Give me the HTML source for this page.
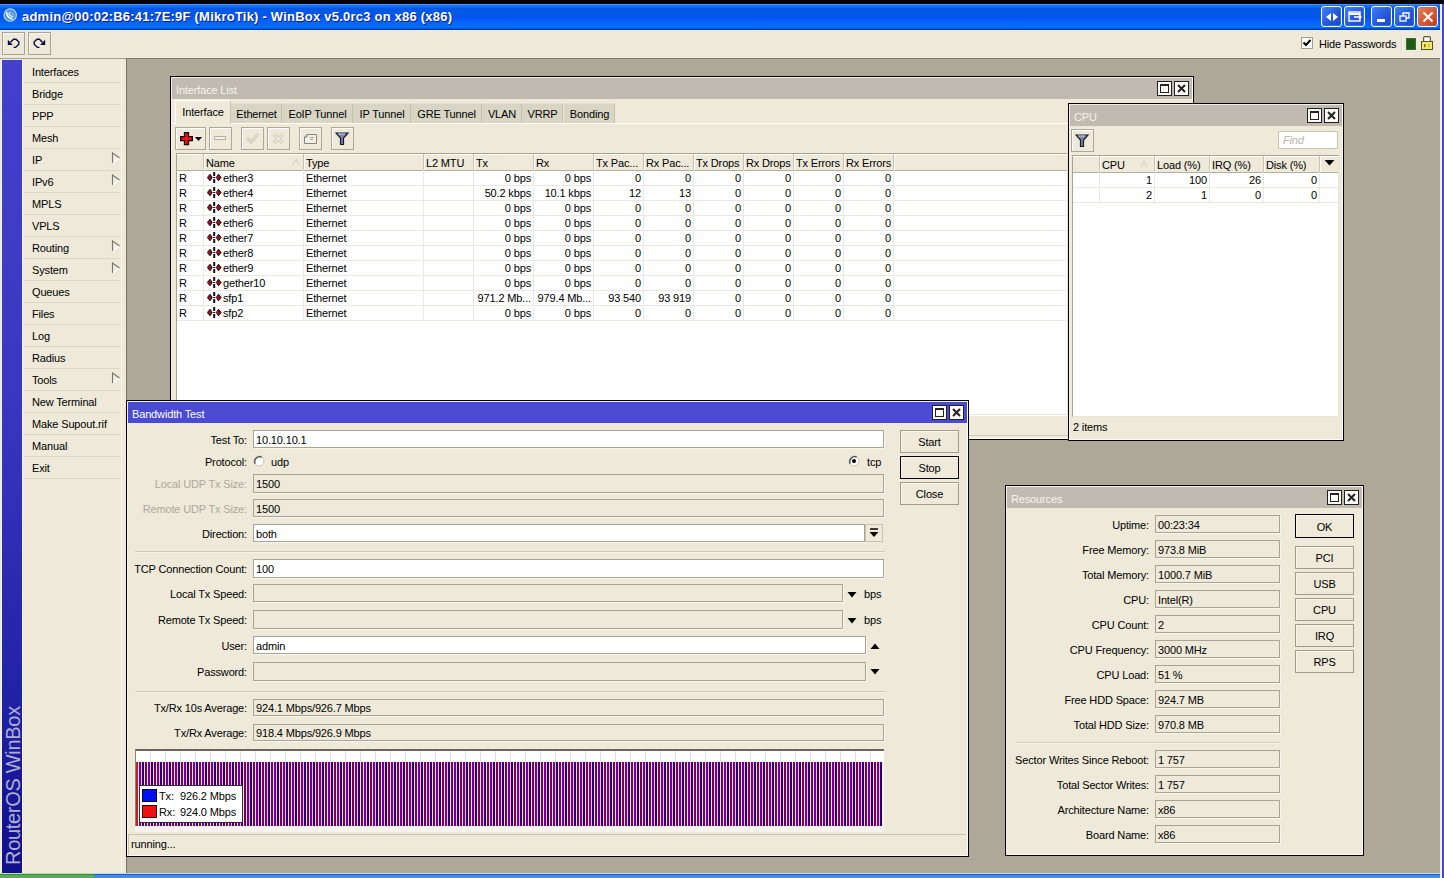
<!DOCTYPE html><html><head><meta charset="utf-8"><style>
*{margin:0;padding:0;box-sizing:border-box}
html,body{width:1444px;height:878px;overflow:hidden;background:#ADA897;font-family:"Liberation Sans",sans-serif;font-size:11px;color:#000}
div{position:absolute}
.t{white-space:pre;letter-spacing:-0.15px}
</style></head><body>
<div style="left:0px;top:0px;width:1444px;height:4px;background:#000"></div>
<div style="left:0px;top:4px;width:1440px;height:26px;background:linear-gradient(#5A8CFF 0px,#5A8CFF 1px,#1070F8 1px,#1070F8 3px,#0058E4 4px,#0058E4 11px,#0C4CE4 12px,#0058F8 14px,#0A62FC 18px,#0070F0 23px,#0070F0 24px,#0038C8 25px,#0038C8 26px)"></div>
<svg style="position:absolute;left:3px;top:8px" width="15" height="15" viewBox="0 0 15 15"><circle cx="7.2" cy="7" r="6.2" fill="#4C8ED8" stroke="#A8D8F4" stroke-width="1.2"/><circle cx="7.5" cy="7" r="3.8" fill="#6FA4D8"/><path d="M3.6 3.8 Q3.2 9.6 9.8 11.4" stroke="#F0FAFF" stroke-width="1.5" fill="none"/><path d="M6 4.5 Q6.2 8.2 10.2 9" stroke="#E8F4FF" stroke-width="1.1" fill="none"/></svg>
<div class="t" style="left:22px;top:5px;height:24px;line-height:24px;text-align:left;color:#fff;font-weight:bold;font-size:13px;letter-spacing:0.22px;text-shadow:1px 1px 0 #0A1E8C">admin@00:02:B6:41:7E:9F (MikroTik) - WinBox v5.0rc3 on x86 (x86)</div>
<div style="left:1321px;top:6px;width:21px;height:21px;border:1px solid #fff;border-radius:3px;background:linear-gradient(135deg,#3C80F8,#2456D8 60%,#1E4CC8);box-shadow:inset 0 0 0 1px rgba(80,130,255,0.4)">
<svg style="position:absolute;left:3px;top:5px" width="14" height="10"><path d="M1 5 L6 1 V9Z M13 5 L8 1 V9Z" fill="#fff"/></svg>
</div>
<div style="left:1344px;top:6px;width:21px;height:21px;border:1px solid #fff;border-radius:3px;background:linear-gradient(135deg,#3C80F8,#2456D8 60%,#1E4CC8);box-shadow:inset 0 0 0 1px rgba(80,130,255,0.4)">
<svg style="position:absolute;left:3px;top:4px" width="15" height="12"><rect x="1" y="1" width="11" height="9" fill="none" stroke="#fff" stroke-width="1.4"/><path d="M1 3 H12" stroke="#fff" stroke-width="2"/><path d="M6 6 H13 M11 4 L13 6 L11 8" stroke="#fff" stroke-width="1.3" fill="none"/></svg>
</div>
<div style="left:1371px;top:6px;width:21px;height:21px;border:1px solid #fff;border-radius:3px;background:linear-gradient(135deg,#3C80F8,#2456D8 60%,#1E4CC8);box-shadow:inset 0 0 0 1px rgba(80,130,255,0.4)">
<div style="left:5px;top:12px;width:8px;height:3px;background:#fff"></div>
</div>
<div style="left:1394px;top:6px;width:21px;height:21px;border:1px solid #fff;border-radius:3px;background:linear-gradient(135deg,#3C80F8,#2456D8 60%,#1E4CC8);box-shadow:inset 0 0 0 1px rgba(80,130,255,0.4)">
<svg style="position:absolute;left:4px;top:4px" width="12" height="12"><rect x="1" y="5" width="6" height="5" fill="none" stroke="#fff" stroke-width="1.3"/><path d="M4 5 V2 H10 V7 H7" fill="none" stroke="#fff" stroke-width="1.3"/></svg>
</div>
<div style="left:1417px;top:6px;width:21px;height:21px;border:1px solid #fff;border-radius:3px;background:linear-gradient(135deg,#E8805A,#D8542C 60%,#C03A1C);box-shadow:inset 0 0 0 1px rgba(80,130,255,0.4)">
<svg style="position:absolute;left:4px;top:4px" width="12" height="12"><path d="M1.5 1.5 L10.5 10.5 M10.5 1.5 L1.5 10.5" stroke="#fff" stroke-width="2"/></svg>
</div>
<div style="left:1440px;top:0px;width:2px;height:878px;background:#F0F0F8"></div>
<div style="left:1442px;top:0px;width:2px;height:878px;background:#4A44E0"></div>
<div style="left:1440px;top:0px;width:4px;height:4px;background:#000"></div>
<div style="left:0px;top:30px;width:1440px;height:29px;background:#EEE9D9;border-top:1px solid #E8ECF8;border-bottom:1px solid #A8A294"></div>
<div style="left:126px;top:58px;width:1314px;height:816px;border-left:1px solid #7A7466;border-top:1px solid #7E786A"></div>
<div style="left:2px;top:32px;width:23px;height:23px;border:1px solid #A8A498;background:#EEE9D9;box-shadow:inset 1px 1px 0 #F8F6EE;"></div>
<div style="left:28px;top:32px;width:23px;height:23px;border:1px solid #A8A498;background:#EEE9D9;box-shadow:inset 1px 1px 0 #F8F6EE;"></div>
<svg style="position:absolute;left:7px;top:38px" width="13" height="11"><path d="M0.8 1.8 V6.9 H5.9Z" fill="#0A0A40"/><path d="M3.5 4.2 L6.6 1.2 H8.9 L11.8 3.8 V6.2 L8.6 9.4 H6.6" fill="none" stroke="#0A0A40" stroke-width="1.4"/></svg>
<svg style="position:absolute;left:33px;top:38px;transform:scaleX(-1)" width="13" height="11"><path d="M0.8 1.8 V6.9 H5.9Z" fill="#0A0A40"/><path d="M3.5 4.2 L6.6 1.2 H8.9 L11.8 3.8 V6.2 L8.6 9.4 H6.6" fill="none" stroke="#0A0A40" stroke-width="1.4"/></svg>
<div style="left:1301px;top:37px;width:12px;height:12px;background:#fff;border:1px solid #A0A090"></div>
<svg style="position:absolute;left:1302px;top:38px" width="10" height="10"><path d="M1.5 4.5 L4 7 L8.5 2" fill="none" stroke="#000" stroke-width="2"/></svg>
<div class="t" style="left:1319px;top:37px;height:15px;line-height:15px;text-align:left;">Hide Passwords</div>
<div style="left:1401px;top:36px;width:1px;height:16px;background:#DDD9CB"></div>
<div style="left:1402px;top:36px;width:1px;height:16px;background:#F8F6F0"></div>
<div style="left:1406px;top:38px;width:10px;height:12px;background:#1E5A14;border:1px solid #3A7030"></div>
<svg style="position:absolute;left:1420px;top:35px" width="14" height="16"><rect x="3.6" y="1.6" width="6.8" height="6" rx="1.2" fill="#FFFFFF" stroke="#5A5440" stroke-width="1.2"/><rect x="1.5" y="6.5" width="11" height="8" fill="#F6EC6A" stroke="#5A5028" stroke-width="1"/><rect x="4" y="9" width="1.6" height="3.2" fill="#8A6A10"/><rect x="8.4" y="9" width="1.1" height="3.2" fill="#B8A020"/></svg>
<div style="left:0px;top:59px;width:126px;height:815px;background:#EEE9D9"></div>
<div style="left:2px;top:60px;width:20px;height:814px;background:linear-gradient(#4440CC,#3A38C0 40%,#2424A8 75%,#10108C)"></div>
<div style="left:1px;top:60px;width:1px;height:814px;background:#F2F4FA"></div>
<div style="left:22px;top:60px;width:1px;height:814px;background:#F2F4FA"></div>
<div style="left:121px;top:60px;width:1px;height:814px;background:#F8F5EC"></div>
<div class="t" style="left:2px;top:865px;width:160px;height:22px;line-height:22px;transform-origin:0 0;transform:rotate(-90deg);color:#B0B0D0;font-size:20px;letter-spacing:-0.3px;">RouterOS WinBox</div>
<div class="t" style="left:32px;top:61px;height:22px;line-height:22px;text-align:left;">Interfaces</div>
<div style="left:24px;top:82px;width:97px;height:1px;background:#DAD6C6"></div>
<div class="t" style="left:32px;top:83px;height:22px;line-height:22px;text-align:left;">Bridge</div>
<div style="left:24px;top:104px;width:97px;height:1px;background:#DAD6C6"></div>
<div class="t" style="left:32px;top:105px;height:22px;line-height:22px;text-align:left;">PPP</div>
<div style="left:24px;top:126px;width:97px;height:1px;background:#DAD6C6"></div>
<div class="t" style="left:32px;top:127px;height:22px;line-height:22px;text-align:left;">Mesh</div>
<div style="left:24px;top:148px;width:97px;height:1px;background:#DAD6C6"></div>
<div class="t" style="left:32px;top:149px;height:22px;line-height:22px;text-align:left;">IP</div>
<div style="left:24px;top:170px;width:97px;height:1px;background:#DAD6C6"></div>
<svg style="position:absolute;left:111px;top:152px" width="10" height="13"><path d="M1.5 1 L8.5 6 L1.5 11Z" fill="#F0ECE2"/><path d="M1.5 11 L8.5 6" stroke="#FFFFFF" stroke-width="1.2"/><path d="M1.5 11 V1 L8.5 6" fill="none" stroke="#78746A" stroke-width="1.1"/></svg>
<div class="t" style="left:32px;top:171px;height:22px;line-height:22px;text-align:left;">IPv6</div>
<div style="left:24px;top:192px;width:97px;height:1px;background:#DAD6C6"></div>
<svg style="position:absolute;left:111px;top:174px" width="10" height="13"><path d="M1.5 1 L8.5 6 L1.5 11Z" fill="#F0ECE2"/><path d="M1.5 11 L8.5 6" stroke="#FFFFFF" stroke-width="1.2"/><path d="M1.5 11 V1 L8.5 6" fill="none" stroke="#78746A" stroke-width="1.1"/></svg>
<div class="t" style="left:32px;top:193px;height:22px;line-height:22px;text-align:left;">MPLS</div>
<div style="left:24px;top:214px;width:97px;height:1px;background:#DAD6C6"></div>
<div class="t" style="left:32px;top:215px;height:22px;line-height:22px;text-align:left;">VPLS</div>
<div style="left:24px;top:236px;width:97px;height:1px;background:#DAD6C6"></div>
<div class="t" style="left:32px;top:237px;height:22px;line-height:22px;text-align:left;">Routing</div>
<div style="left:24px;top:258px;width:97px;height:1px;background:#DAD6C6"></div>
<svg style="position:absolute;left:111px;top:240px" width="10" height="13"><path d="M1.5 1 L8.5 6 L1.5 11Z" fill="#F0ECE2"/><path d="M1.5 11 L8.5 6" stroke="#FFFFFF" stroke-width="1.2"/><path d="M1.5 11 V1 L8.5 6" fill="none" stroke="#78746A" stroke-width="1.1"/></svg>
<div class="t" style="left:32px;top:259px;height:22px;line-height:22px;text-align:left;">System</div>
<div style="left:24px;top:280px;width:97px;height:1px;background:#DAD6C6"></div>
<svg style="position:absolute;left:111px;top:262px" width="10" height="13"><path d="M1.5 1 L8.5 6 L1.5 11Z" fill="#F0ECE2"/><path d="M1.5 11 L8.5 6" stroke="#FFFFFF" stroke-width="1.2"/><path d="M1.5 11 V1 L8.5 6" fill="none" stroke="#78746A" stroke-width="1.1"/></svg>
<div class="t" style="left:32px;top:281px;height:22px;line-height:22px;text-align:left;">Queues</div>
<div style="left:24px;top:302px;width:97px;height:1px;background:#DAD6C6"></div>
<div class="t" style="left:32px;top:303px;height:22px;line-height:22px;text-align:left;">Files</div>
<div style="left:24px;top:324px;width:97px;height:1px;background:#DAD6C6"></div>
<div class="t" style="left:32px;top:325px;height:22px;line-height:22px;text-align:left;">Log</div>
<div style="left:24px;top:346px;width:97px;height:1px;background:#DAD6C6"></div>
<div class="t" style="left:32px;top:347px;height:22px;line-height:22px;text-align:left;">Radius</div>
<div style="left:24px;top:368px;width:97px;height:1px;background:#DAD6C6"></div>
<div class="t" style="left:32px;top:369px;height:22px;line-height:22px;text-align:left;">Tools</div>
<div style="left:24px;top:390px;width:97px;height:1px;background:#DAD6C6"></div>
<svg style="position:absolute;left:111px;top:372px" width="10" height="13"><path d="M1.5 1 L8.5 6 L1.5 11Z" fill="#F0ECE2"/><path d="M1.5 11 L8.5 6" stroke="#FFFFFF" stroke-width="1.2"/><path d="M1.5 11 V1 L8.5 6" fill="none" stroke="#78746A" stroke-width="1.1"/></svg>
<div class="t" style="left:32px;top:391px;height:22px;line-height:22px;text-align:left;">New Terminal</div>
<div style="left:24px;top:412px;width:97px;height:1px;background:#DAD6C6"></div>
<div class="t" style="left:32px;top:413px;height:22px;line-height:22px;text-align:left;">Make Supout.rif</div>
<div style="left:24px;top:434px;width:97px;height:1px;background:#DAD6C6"></div>
<div class="t" style="left:32px;top:435px;height:22px;line-height:22px;text-align:left;">Manual</div>
<div style="left:24px;top:456px;width:97px;height:1px;background:#DAD6C6"></div>
<div class="t" style="left:32px;top:457px;height:22px;line-height:22px;text-align:left;">Exit</div>
<div style="left:24px;top:478px;width:97px;height:1px;background:#DAD6C6"></div>
<div style="left:0px;top:873px;width:1440px;height:5px;background:linear-gradient(#C0D8E0 0px,#C0D8E0 1px,#2858C8 1px,#2858C8 2px,#3C90E8 2px)"></div>
<div style="left:0px;top:873px;width:94px;height:5px;background:linear-gradient(#B8E0B0 0px,#B8E0B0 1px,#3C8A3C 1px,#3C8A3C 2px,#5AAA5A 2px)"></div>
<div style="left:170px;top:76px;width:1024px;height:364px;background:#EEE9D9;border:1px solid #000"></div>
<div style="left:171px;top:77px;width:1022px;height:362px;border-top:1px solid #F4F0E6;border-left:1px solid #F4F0E6;border-right:1px solid #FFFDF6;border-bottom:1px solid #FFFDF6"></div>
<div style="left:172px;top:78px;width:1020px;height:21px;background:#C0BAB0"></div>
<div class="t" style="left:176px;top:80px;height:20px;line-height:20px;text-align:left;color:#F6F4EE">Interface List</div>
<div style="left:1157px;top:81px;width:15px;height:15px;background:#FBFAF6;border:1px solid #222"></div>
<div style="left:1174px;top:81px;width:15px;height:15px;background:#FBFAF6;border:1px solid #222"></div>
<div style="left:1160px;top:84px;width:9px;height:9px;border:1px solid #222;border-top-width:2px"></div>
<svg style="position:absolute;left:1177px;top:84px" width="9" height="9"><path d="M1 1 L8 8 M8 1 L1 8" stroke="#222" stroke-width="2"/></svg>
<div style="left:172px;top:123px;width:1020px;height:1px;background:#FFFFFF"></div>
<div style="left:175px;top:100px;width:56px;height:24px;background:#EEE9D9;border-left:1px solid #FFFFFF;border-top:1px solid #FFFFFF;border-right:1px solid #C8C4B4"></div>
<div class="t" style="left:175px;top:102px;height:21px;line-height:21px;width:56px;text-align:center;">Interface</div>
<div style="left:231px;top:103px;width:51px;height:20px;background:#D9D5C5;border-right:1px solid #C4C0B0;border-top:1px solid #E6E2D4"></div>
<div class="t" style="left:231px;top:104px;height:20px;line-height:20px;width:51px;text-align:center;">Ethernet</div>
<div style="left:282px;top:103px;width:71px;height:20px;background:#D9D5C5;border-right:1px solid #C4C0B0;border-top:1px solid #E6E2D4"></div>
<div class="t" style="left:282px;top:104px;height:20px;line-height:20px;width:71px;text-align:center;">EoIP Tunnel</div>
<div style="left:353px;top:103px;width:58px;height:20px;background:#D9D5C5;border-right:1px solid #C4C0B0;border-top:1px solid #E6E2D4"></div>
<div class="t" style="left:353px;top:104px;height:20px;line-height:20px;width:58px;text-align:center;">IP Tunnel</div>
<div style="left:411px;top:103px;width:71px;height:20px;background:#D9D5C5;border-right:1px solid #C4C0B0;border-top:1px solid #E6E2D4"></div>
<div class="t" style="left:411px;top:104px;height:20px;line-height:20px;width:71px;text-align:center;">GRE Tunnel</div>
<div style="left:482px;top:103px;width:40px;height:20px;background:#D9D5C5;border-right:1px solid #C4C0B0;border-top:1px solid #E6E2D4"></div>
<div class="t" style="left:482px;top:104px;height:20px;line-height:20px;width:40px;text-align:center;">VLAN</div>
<div style="left:522px;top:103px;width:41px;height:20px;background:#D9D5C5;border-right:1px solid #C4C0B0;border-top:1px solid #E6E2D4"></div>
<div class="t" style="left:522px;top:104px;height:20px;line-height:20px;width:41px;text-align:center;">VRRP</div>
<div style="left:564px;top:103px;width:51px;height:20px;background:#D9D5C5;border-right:1px solid #C4C0B0;border-top:1px solid #E6E2D4"></div>
<div class="t" style="left:564px;top:104px;height:20px;line-height:20px;width:51px;text-align:center;">Bonding</div>
<div style="left:175px;top:127px;width:31px;height:23px;background:#EEE9D9;border:1px solid #ACA898;box-shadow:inset 1px 1px 0 #FFF"></div>
<div style="left:209px;top:127px;width:23px;height:23px;background:#EEE9D9;border:1px solid #ACA898;box-shadow:inset 1px 1px 0 #FFF"></div>
<div style="left:241px;top:127px;width:23px;height:23px;background:#EEE9D9;border:1px solid #ACA898;box-shadow:inset 1px 1px 0 #FFF"></div>
<div style="left:267px;top:127px;width:23px;height:23px;background:#EEE9D9;border:1px solid #ACA898;box-shadow:inset 1px 1px 0 #FFF"></div>
<div style="left:299px;top:127px;width:23px;height:23px;background:#EEE9D9;border:1px solid #ACA898;box-shadow:inset 1px 1px 0 #FFF"></div>
<div style="left:331px;top:127px;width:23px;height:23px;background:#EEE9D9;border:1px solid #ACA898;box-shadow:inset 1px 1px 0 #FFF"></div>
<svg style="position:absolute;left:180px;top:132px" width="23" height="14"><path d="M4.5 0.7 H8.5 V4.7 H12.3 V8.7 H8.5 V12.7 H4.5 V8.7 H0.7 V4.7 H4.5Z" fill="#E8141C" stroke="#1A0000" stroke-width="1.3"/><path d="M15 5 H22 L18.5 9Z" fill="#000"/></svg>
<svg style="position:absolute;left:213px;top:133px" width="15" height="10"><rect x="1.5" y="3.5" width="11" height="3" fill="#F4F2EA" stroke="#B4B0A0"/></svg>
<svg style="position:absolute;left:245px;top:131px" width="15" height="14"><path d="M2 7 L6 11 L13 3" fill="none" stroke="#C4C0B0" stroke-width="2.5"/><path d="M2 7 L6 11 L13 3" fill="none" stroke="#F4F2EA" stroke-width="1"/></svg>
<svg style="position:absolute;left:271px;top:131px" width="15" height="14"><path d="M3 3 L12 12 M12 3 L3 12" fill="none" stroke="#C4C0B0" stroke-width="3"/><path d="M3 3 L12 12 M12 3 L3 12" fill="none" stroke="#F4F2EA" stroke-width="1.2"/></svg>
<svg style="position:absolute;left:303px;top:133px" width="15" height="12"><path d="M1.5 4 L4 1.5 H13.5 V10.5 H1.5Z" fill="#F2F0E8" stroke="#8A8678"/><path d="M1.5 4 H4 V1.5" fill="none" stroke="#8A8678"/><path d="M7 4.5 H11 M7 6.5 H10" stroke="#A8A498"/></svg>
<svg style="position:absolute;left:335px;top:131px" width="15" height="15"><path d="M1 2 H13 L8.5 7 V13.5 H5.5 V7Z" fill="#7A86A8" stroke="#1A1A2A" stroke-width="1.2"/><path d="M3 3 H10" stroke="#C8D0E8" stroke-width="1"/></svg>
<div style="left:176px;top:153px;width:892px;height:262px;background:#FFFFFF;border:1px solid #A8A494;border-right-color:#E8E4D8;border-bottom-color:#E8E4D8;overflow:hidden"></div>
<div style="left:177px;top:154px;width:890px;height:17px;background:#EEE9D9;border-bottom:1px solid #B4B0A0;box-shadow:inset 0 1px 0 #FFF"></div>
<div style="left:203px;top:154px;width:1px;height:16px;background:#C8C4B4"></div>
<div style="left:204px;top:154px;width:1px;height:16px;background:#FFFFFF"></div>
<div style="left:303px;top:154px;width:1px;height:16px;background:#C8C4B4"></div>
<div style="left:304px;top:154px;width:1px;height:16px;background:#FFFFFF"></div>
<div class="t" style="left:206px;top:155px;height:16px;line-height:16px;text-align:left;">Name</div>
<div style="left:423px;top:154px;width:1px;height:16px;background:#C8C4B4"></div>
<div style="left:424px;top:154px;width:1px;height:16px;background:#FFFFFF"></div>
<div class="t" style="left:306px;top:155px;height:16px;line-height:16px;text-align:left;">Type</div>
<div style="left:473px;top:154px;width:1px;height:16px;background:#C8C4B4"></div>
<div style="left:474px;top:154px;width:1px;height:16px;background:#FFFFFF"></div>
<div class="t" style="left:426px;top:155px;height:16px;line-height:16px;text-align:left;">L2 MTU</div>
<div style="left:533px;top:154px;width:1px;height:16px;background:#C8C4B4"></div>
<div style="left:534px;top:154px;width:1px;height:16px;background:#FFFFFF"></div>
<div class="t" style="left:476px;top:155px;height:16px;line-height:16px;text-align:left;">Tx</div>
<div style="left:593px;top:154px;width:1px;height:16px;background:#C8C4B4"></div>
<div style="left:594px;top:154px;width:1px;height:16px;background:#FFFFFF"></div>
<div class="t" style="left:536px;top:155px;height:16px;line-height:16px;text-align:left;">Rx</div>
<div style="left:643px;top:154px;width:1px;height:16px;background:#C8C4B4"></div>
<div style="left:644px;top:154px;width:1px;height:16px;background:#FFFFFF"></div>
<div class="t" style="left:596px;top:155px;height:16px;line-height:16px;text-align:left;">Tx Pac...</div>
<div style="left:693px;top:154px;width:1px;height:16px;background:#C8C4B4"></div>
<div style="left:694px;top:154px;width:1px;height:16px;background:#FFFFFF"></div>
<div class="t" style="left:646px;top:155px;height:16px;line-height:16px;text-align:left;">Rx Pac...</div>
<div style="left:743px;top:154px;width:1px;height:16px;background:#C8C4B4"></div>
<div style="left:744px;top:154px;width:1px;height:16px;background:#FFFFFF"></div>
<div class="t" style="left:696px;top:155px;height:16px;line-height:16px;text-align:left;">Tx Drops</div>
<div style="left:793px;top:154px;width:1px;height:16px;background:#C8C4B4"></div>
<div style="left:794px;top:154px;width:1px;height:16px;background:#FFFFFF"></div>
<div class="t" style="left:746px;top:155px;height:16px;line-height:16px;text-align:left;">Rx Drops</div>
<div style="left:843px;top:154px;width:1px;height:16px;background:#C8C4B4"></div>
<div style="left:844px;top:154px;width:1px;height:16px;background:#FFFFFF"></div>
<div class="t" style="left:796px;top:155px;height:16px;line-height:16px;text-align:left;">Tx Errors</div>
<div style="left:893px;top:154px;width:1px;height:16px;background:#C8C4B4"></div>
<div style="left:894px;top:154px;width:1px;height:16px;background:#FFFFFF"></div>
<div class="t" style="left:846px;top:155px;height:16px;line-height:16px;text-align:left;">Rx Errors</div>
<div style="left:177px;top:185px;width:890px;height:1px;background:#EAE8E2"></div>
<div style="left:177px;top:200px;width:890px;height:1px;background:#EAE8E2"></div>
<div style="left:177px;top:215px;width:890px;height:1px;background:#EAE8E2"></div>
<div style="left:177px;top:230px;width:890px;height:1px;background:#EAE8E2"></div>
<div style="left:177px;top:245px;width:890px;height:1px;background:#EAE8E2"></div>
<div style="left:177px;top:260px;width:890px;height:1px;background:#EAE8E2"></div>
<div style="left:177px;top:275px;width:890px;height:1px;background:#EAE8E2"></div>
<div style="left:177px;top:290px;width:890px;height:1px;background:#EAE8E2"></div>
<div style="left:177px;top:305px;width:890px;height:1px;background:#EAE8E2"></div>
<div style="left:177px;top:320px;width:890px;height:1px;background:#EAE8E2"></div>
<div style="left:203px;top:170px;width:1px;height:151px;background:#EAE8E2"></div>
<div style="left:303px;top:170px;width:1px;height:151px;background:#EAE8E2"></div>
<div style="left:423px;top:170px;width:1px;height:151px;background:#EAE8E2"></div>
<div style="left:473px;top:170px;width:1px;height:151px;background:#EAE8E2"></div>
<div style="left:533px;top:170px;width:1px;height:151px;background:#EAE8E2"></div>
<div style="left:593px;top:170px;width:1px;height:151px;background:#EAE8E2"></div>
<div style="left:643px;top:170px;width:1px;height:151px;background:#EAE8E2"></div>
<div style="left:693px;top:170px;width:1px;height:151px;background:#EAE8E2"></div>
<div style="left:743px;top:170px;width:1px;height:151px;background:#EAE8E2"></div>
<div style="left:793px;top:170px;width:1px;height:151px;background:#EAE8E2"></div>
<div style="left:843px;top:170px;width:1px;height:151px;background:#EAE8E2"></div>
<div style="left:893px;top:170px;width:1px;height:151px;background:#EAE8E2"></div>
<div class="t" style="left:179px;top:171px;height:14px;line-height:14px;text-align:left;">R</div>
<svg style="position:absolute;left:207px;top:172px" width="15" height="11"><path d="M0.4 5.5 L3 2.2 L5.2 5.5 L3 8.8Z M14.1 5.5 L11.5 2.2 L9.3 5.5 L11.5 8.8Z" fill="#8C1628" stroke="#2A0608" stroke-width="1"/><path d="M7.2 0 V4 M7.2 5 V6 M7.2 7 V11" stroke="#111" stroke-width="2"/></svg>
<div class="t" style="left:223px;top:171px;height:14px;line-height:14px;text-align:left;">ether3</div>
<div class="t" style="left:306px;top:171px;height:14px;line-height:14px;text-align:left;">Ethernet</div>
<div class="t" style="left:473px;top:171px;height:14px;line-height:14px;width:58px;text-align:right;">0 bps</div>
<div class="t" style="left:533px;top:171px;height:14px;line-height:14px;width:58px;text-align:right;">0 bps</div>
<div class="t" style="left:593px;top:171px;height:14px;line-height:14px;width:48px;text-align:right;">0</div>
<div class="t" style="left:643px;top:171px;height:14px;line-height:14px;width:48px;text-align:right;">0</div>
<div class="t" style="left:693px;top:171px;height:14px;line-height:14px;width:48px;text-align:right;">0</div>
<div class="t" style="left:743px;top:171px;height:14px;line-height:14px;width:48px;text-align:right;">0</div>
<div class="t" style="left:793px;top:171px;height:14px;line-height:14px;width:48px;text-align:right;">0</div>
<div class="t" style="left:843px;top:171px;height:14px;line-height:14px;width:48px;text-align:right;">0</div>
<div class="t" style="left:179px;top:186px;height:14px;line-height:14px;text-align:left;">R</div>
<svg style="position:absolute;left:207px;top:187px" width="15" height="11"><path d="M0.4 5.5 L3 2.2 L5.2 5.5 L3 8.8Z M14.1 5.5 L11.5 2.2 L9.3 5.5 L11.5 8.8Z" fill="#8C1628" stroke="#2A0608" stroke-width="1"/><path d="M7.2 0 V4 M7.2 5 V6 M7.2 7 V11" stroke="#111" stroke-width="2"/></svg>
<div class="t" style="left:223px;top:186px;height:14px;line-height:14px;text-align:left;">ether4</div>
<div class="t" style="left:306px;top:186px;height:14px;line-height:14px;text-align:left;">Ethernet</div>
<div class="t" style="left:473px;top:186px;height:14px;line-height:14px;width:58px;text-align:right;">50.2 kbps</div>
<div class="t" style="left:533px;top:186px;height:14px;line-height:14px;width:58px;text-align:right;">10.1 kbps</div>
<div class="t" style="left:593px;top:186px;height:14px;line-height:14px;width:48px;text-align:right;">12</div>
<div class="t" style="left:643px;top:186px;height:14px;line-height:14px;width:48px;text-align:right;">13</div>
<div class="t" style="left:693px;top:186px;height:14px;line-height:14px;width:48px;text-align:right;">0</div>
<div class="t" style="left:743px;top:186px;height:14px;line-height:14px;width:48px;text-align:right;">0</div>
<div class="t" style="left:793px;top:186px;height:14px;line-height:14px;width:48px;text-align:right;">0</div>
<div class="t" style="left:843px;top:186px;height:14px;line-height:14px;width:48px;text-align:right;">0</div>
<div class="t" style="left:179px;top:201px;height:14px;line-height:14px;text-align:left;">R</div>
<svg style="position:absolute;left:207px;top:202px" width="15" height="11"><path d="M0.4 5.5 L3 2.2 L5.2 5.5 L3 8.8Z M14.1 5.5 L11.5 2.2 L9.3 5.5 L11.5 8.8Z" fill="#8C1628" stroke="#2A0608" stroke-width="1"/><path d="M7.2 0 V4 M7.2 5 V6 M7.2 7 V11" stroke="#111" stroke-width="2"/></svg>
<div class="t" style="left:223px;top:201px;height:14px;line-height:14px;text-align:left;">ether5</div>
<div class="t" style="left:306px;top:201px;height:14px;line-height:14px;text-align:left;">Ethernet</div>
<div class="t" style="left:473px;top:201px;height:14px;line-height:14px;width:58px;text-align:right;">0 bps</div>
<div class="t" style="left:533px;top:201px;height:14px;line-height:14px;width:58px;text-align:right;">0 bps</div>
<div class="t" style="left:593px;top:201px;height:14px;line-height:14px;width:48px;text-align:right;">0</div>
<div class="t" style="left:643px;top:201px;height:14px;line-height:14px;width:48px;text-align:right;">0</div>
<div class="t" style="left:693px;top:201px;height:14px;line-height:14px;width:48px;text-align:right;">0</div>
<div class="t" style="left:743px;top:201px;height:14px;line-height:14px;width:48px;text-align:right;">0</div>
<div class="t" style="left:793px;top:201px;height:14px;line-height:14px;width:48px;text-align:right;">0</div>
<div class="t" style="left:843px;top:201px;height:14px;line-height:14px;width:48px;text-align:right;">0</div>
<div class="t" style="left:179px;top:216px;height:14px;line-height:14px;text-align:left;">R</div>
<svg style="position:absolute;left:207px;top:217px" width="15" height="11"><path d="M0.4 5.5 L3 2.2 L5.2 5.5 L3 8.8Z M14.1 5.5 L11.5 2.2 L9.3 5.5 L11.5 8.8Z" fill="#8C1628" stroke="#2A0608" stroke-width="1"/><path d="M7.2 0 V4 M7.2 5 V6 M7.2 7 V11" stroke="#111" stroke-width="2"/></svg>
<div class="t" style="left:223px;top:216px;height:14px;line-height:14px;text-align:left;">ether6</div>
<div class="t" style="left:306px;top:216px;height:14px;line-height:14px;text-align:left;">Ethernet</div>
<div class="t" style="left:473px;top:216px;height:14px;line-height:14px;width:58px;text-align:right;">0 bps</div>
<div class="t" style="left:533px;top:216px;height:14px;line-height:14px;width:58px;text-align:right;">0 bps</div>
<div class="t" style="left:593px;top:216px;height:14px;line-height:14px;width:48px;text-align:right;">0</div>
<div class="t" style="left:643px;top:216px;height:14px;line-height:14px;width:48px;text-align:right;">0</div>
<div class="t" style="left:693px;top:216px;height:14px;line-height:14px;width:48px;text-align:right;">0</div>
<div class="t" style="left:743px;top:216px;height:14px;line-height:14px;width:48px;text-align:right;">0</div>
<div class="t" style="left:793px;top:216px;height:14px;line-height:14px;width:48px;text-align:right;">0</div>
<div class="t" style="left:843px;top:216px;height:14px;line-height:14px;width:48px;text-align:right;">0</div>
<div class="t" style="left:179px;top:231px;height:14px;line-height:14px;text-align:left;">R</div>
<svg style="position:absolute;left:207px;top:232px" width="15" height="11"><path d="M0.4 5.5 L3 2.2 L5.2 5.5 L3 8.8Z M14.1 5.5 L11.5 2.2 L9.3 5.5 L11.5 8.8Z" fill="#8C1628" stroke="#2A0608" stroke-width="1"/><path d="M7.2 0 V4 M7.2 5 V6 M7.2 7 V11" stroke="#111" stroke-width="2"/></svg>
<div class="t" style="left:223px;top:231px;height:14px;line-height:14px;text-align:left;">ether7</div>
<div class="t" style="left:306px;top:231px;height:14px;line-height:14px;text-align:left;">Ethernet</div>
<div class="t" style="left:473px;top:231px;height:14px;line-height:14px;width:58px;text-align:right;">0 bps</div>
<div class="t" style="left:533px;top:231px;height:14px;line-height:14px;width:58px;text-align:right;">0 bps</div>
<div class="t" style="left:593px;top:231px;height:14px;line-height:14px;width:48px;text-align:right;">0</div>
<div class="t" style="left:643px;top:231px;height:14px;line-height:14px;width:48px;text-align:right;">0</div>
<div class="t" style="left:693px;top:231px;height:14px;line-height:14px;width:48px;text-align:right;">0</div>
<div class="t" style="left:743px;top:231px;height:14px;line-height:14px;width:48px;text-align:right;">0</div>
<div class="t" style="left:793px;top:231px;height:14px;line-height:14px;width:48px;text-align:right;">0</div>
<div class="t" style="left:843px;top:231px;height:14px;line-height:14px;width:48px;text-align:right;">0</div>
<div class="t" style="left:179px;top:246px;height:14px;line-height:14px;text-align:left;">R</div>
<svg style="position:absolute;left:207px;top:247px" width="15" height="11"><path d="M0.4 5.5 L3 2.2 L5.2 5.5 L3 8.8Z M14.1 5.5 L11.5 2.2 L9.3 5.5 L11.5 8.8Z" fill="#8C1628" stroke="#2A0608" stroke-width="1"/><path d="M7.2 0 V4 M7.2 5 V6 M7.2 7 V11" stroke="#111" stroke-width="2"/></svg>
<div class="t" style="left:223px;top:246px;height:14px;line-height:14px;text-align:left;">ether8</div>
<div class="t" style="left:306px;top:246px;height:14px;line-height:14px;text-align:left;">Ethernet</div>
<div class="t" style="left:473px;top:246px;height:14px;line-height:14px;width:58px;text-align:right;">0 bps</div>
<div class="t" style="left:533px;top:246px;height:14px;line-height:14px;width:58px;text-align:right;">0 bps</div>
<div class="t" style="left:593px;top:246px;height:14px;line-height:14px;width:48px;text-align:right;">0</div>
<div class="t" style="left:643px;top:246px;height:14px;line-height:14px;width:48px;text-align:right;">0</div>
<div class="t" style="left:693px;top:246px;height:14px;line-height:14px;width:48px;text-align:right;">0</div>
<div class="t" style="left:743px;top:246px;height:14px;line-height:14px;width:48px;text-align:right;">0</div>
<div class="t" style="left:793px;top:246px;height:14px;line-height:14px;width:48px;text-align:right;">0</div>
<div class="t" style="left:843px;top:246px;height:14px;line-height:14px;width:48px;text-align:right;">0</div>
<div class="t" style="left:179px;top:261px;height:14px;line-height:14px;text-align:left;">R</div>
<svg style="position:absolute;left:207px;top:262px" width="15" height="11"><path d="M0.4 5.5 L3 2.2 L5.2 5.5 L3 8.8Z M14.1 5.5 L11.5 2.2 L9.3 5.5 L11.5 8.8Z" fill="#8C1628" stroke="#2A0608" stroke-width="1"/><path d="M7.2 0 V4 M7.2 5 V6 M7.2 7 V11" stroke="#111" stroke-width="2"/></svg>
<div class="t" style="left:223px;top:261px;height:14px;line-height:14px;text-align:left;">ether9</div>
<div class="t" style="left:306px;top:261px;height:14px;line-height:14px;text-align:left;">Ethernet</div>
<div class="t" style="left:473px;top:261px;height:14px;line-height:14px;width:58px;text-align:right;">0 bps</div>
<div class="t" style="left:533px;top:261px;height:14px;line-height:14px;width:58px;text-align:right;">0 bps</div>
<div class="t" style="left:593px;top:261px;height:14px;line-height:14px;width:48px;text-align:right;">0</div>
<div class="t" style="left:643px;top:261px;height:14px;line-height:14px;width:48px;text-align:right;">0</div>
<div class="t" style="left:693px;top:261px;height:14px;line-height:14px;width:48px;text-align:right;">0</div>
<div class="t" style="left:743px;top:261px;height:14px;line-height:14px;width:48px;text-align:right;">0</div>
<div class="t" style="left:793px;top:261px;height:14px;line-height:14px;width:48px;text-align:right;">0</div>
<div class="t" style="left:843px;top:261px;height:14px;line-height:14px;width:48px;text-align:right;">0</div>
<div class="t" style="left:179px;top:276px;height:14px;line-height:14px;text-align:left;">R</div>
<svg style="position:absolute;left:207px;top:277px" width="15" height="11"><path d="M0.4 5.5 L3 2.2 L5.2 5.5 L3 8.8Z M14.1 5.5 L11.5 2.2 L9.3 5.5 L11.5 8.8Z" fill="#8C1628" stroke="#2A0608" stroke-width="1"/><path d="M7.2 0 V4 M7.2 5 V6 M7.2 7 V11" stroke="#111" stroke-width="2"/></svg>
<div class="t" style="left:223px;top:276px;height:14px;line-height:14px;text-align:left;">gether10</div>
<div class="t" style="left:306px;top:276px;height:14px;line-height:14px;text-align:left;">Ethernet</div>
<div class="t" style="left:473px;top:276px;height:14px;line-height:14px;width:58px;text-align:right;">0 bps</div>
<div class="t" style="left:533px;top:276px;height:14px;line-height:14px;width:58px;text-align:right;">0 bps</div>
<div class="t" style="left:593px;top:276px;height:14px;line-height:14px;width:48px;text-align:right;">0</div>
<div class="t" style="left:643px;top:276px;height:14px;line-height:14px;width:48px;text-align:right;">0</div>
<div class="t" style="left:693px;top:276px;height:14px;line-height:14px;width:48px;text-align:right;">0</div>
<div class="t" style="left:743px;top:276px;height:14px;line-height:14px;width:48px;text-align:right;">0</div>
<div class="t" style="left:793px;top:276px;height:14px;line-height:14px;width:48px;text-align:right;">0</div>
<div class="t" style="left:843px;top:276px;height:14px;line-height:14px;width:48px;text-align:right;">0</div>
<div class="t" style="left:179px;top:291px;height:14px;line-height:14px;text-align:left;">R</div>
<svg style="position:absolute;left:207px;top:292px" width="15" height="11"><path d="M0.4 5.5 L3 2.2 L5.2 5.5 L3 8.8Z M14.1 5.5 L11.5 2.2 L9.3 5.5 L11.5 8.8Z" fill="#8C1628" stroke="#2A0608" stroke-width="1"/><path d="M7.2 0 V4 M7.2 5 V6 M7.2 7 V11" stroke="#111" stroke-width="2"/></svg>
<div class="t" style="left:223px;top:291px;height:14px;line-height:14px;text-align:left;">sfp1</div>
<div class="t" style="left:306px;top:291px;height:14px;line-height:14px;text-align:left;">Ethernet</div>
<div class="t" style="left:473px;top:291px;height:14px;line-height:14px;width:58px;text-align:right;">971.2 Mb...</div>
<div class="t" style="left:533px;top:291px;height:14px;line-height:14px;width:58px;text-align:right;">979.4 Mb...</div>
<div class="t" style="left:593px;top:291px;height:14px;line-height:14px;width:48px;text-align:right;">93 540</div>
<div class="t" style="left:643px;top:291px;height:14px;line-height:14px;width:48px;text-align:right;">93 919</div>
<div class="t" style="left:693px;top:291px;height:14px;line-height:14px;width:48px;text-align:right;">0</div>
<div class="t" style="left:743px;top:291px;height:14px;line-height:14px;width:48px;text-align:right;">0</div>
<div class="t" style="left:793px;top:291px;height:14px;line-height:14px;width:48px;text-align:right;">0</div>
<div class="t" style="left:843px;top:291px;height:14px;line-height:14px;width:48px;text-align:right;">0</div>
<div class="t" style="left:179px;top:306px;height:14px;line-height:14px;text-align:left;">R</div>
<svg style="position:absolute;left:207px;top:307px" width="15" height="11"><path d="M0.4 5.5 L3 2.2 L5.2 5.5 L3 8.8Z M14.1 5.5 L11.5 2.2 L9.3 5.5 L11.5 8.8Z" fill="#8C1628" stroke="#2A0608" stroke-width="1"/><path d="M7.2 0 V4 M7.2 5 V6 M7.2 7 V11" stroke="#111" stroke-width="2"/></svg>
<div class="t" style="left:223px;top:306px;height:14px;line-height:14px;text-align:left;">sfp2</div>
<div class="t" style="left:306px;top:306px;height:14px;line-height:14px;text-align:left;">Ethernet</div>
<div class="t" style="left:473px;top:306px;height:14px;line-height:14px;width:58px;text-align:right;">0 bps</div>
<div class="t" style="left:533px;top:306px;height:14px;line-height:14px;width:58px;text-align:right;">0 bps</div>
<div class="t" style="left:593px;top:306px;height:14px;line-height:14px;width:48px;text-align:right;">0</div>
<div class="t" style="left:643px;top:306px;height:14px;line-height:14px;width:48px;text-align:right;">0</div>
<div class="t" style="left:693px;top:306px;height:14px;line-height:14px;width:48px;text-align:right;">0</div>
<div class="t" style="left:743px;top:306px;height:14px;line-height:14px;width:48px;text-align:right;">0</div>
<div class="t" style="left:793px;top:306px;height:14px;line-height:14px;width:48px;text-align:right;">0</div>
<div class="t" style="left:843px;top:306px;height:14px;line-height:14px;width:48px;text-align:right;">0</div>
<svg style="position:absolute;left:292px;top:158px" width="8" height="8"><path d="M1 7 L4 1 L7 7" fill="none" stroke="#D0CCC0" stroke-width="1"/></svg>
<div style="left:172px;top:415px;width:1020px;height:21px;background:#EEE9D9;border-top:1px solid #FFFFFF"></div>
<div style="left:176px;top:435px;width:1015px;height:1px;background:#D0CCBC"></div>
<div style="left:1068px;top:103px;width:276px;height:338px;background:#EEE9D9;border:1px solid #000"></div>
<div style="left:1069px;top:104px;width:274px;height:336px;border-top:1px solid #F4F0E6;border-left:1px solid #F4F0E6;border-right:1px solid #FFFDF6;border-bottom:1px solid #FFFDF6"></div>
<div style="left:1070px;top:105px;width:272px;height:21px;background:#C0BAB0"></div>
<div class="t" style="left:1074px;top:107px;height:20px;line-height:20px;text-align:left;color:#F6F4EE">CPU</div>
<div style="left:1307px;top:108px;width:15px;height:15px;background:#FBFAF6;border:1px solid #222"></div>
<div style="left:1324px;top:108px;width:15px;height:15px;background:#FBFAF6;border:1px solid #222"></div>
<div style="left:1310px;top:111px;width:9px;height:9px;border:1px solid #222;border-top-width:2px"></div>
<svg style="position:absolute;left:1327px;top:111px" width="9" height="9"><path d="M1 1 L8 8 M8 1 L1 8" stroke="#222" stroke-width="2"/></svg>
<div style="left:1071px;top:129px;width:23px;height:23px;background:#EEE9D9;border:1px solid #ACA898;box-shadow:inset 1px 1px 0 #FFF"></div>
<svg style="position:absolute;left:1075px;top:133px" width="15" height="15"><path d="M1 2 H13 L8.5 7 V13.5 H5.5 V7Z" fill="#7A86A8" stroke="#1A1A2A" stroke-width="1.2"/><path d="M3 3 H10" stroke="#C8D0E8" stroke-width="1"/></svg>
<div style="left:1278px;top:131px;width:60px;height:18px;background:#FFFFFF;border:1px solid #C8C4B4"></div>
<div class="t" style="left:1283px;top:132px;height:16px;line-height:16px;text-align:left;color:#B8B4A8;font-style:italic">Find</div>
<div style="left:1072px;top:155px;width:267px;height:262px;background:#FFFFFF;border:1px solid #A8A494;border-right-color:#E8E4D8;border-bottom-color:#E8E4D8;overflow:hidden"></div>
<div style="left:1073px;top:156px;width:265px;height:17px;background:#EEE9D9;border-bottom:1px solid #B4B0A0;box-shadow:inset 0 1px 0 #FFF"></div>
<div style="left:1099px;top:156px;width:1px;height:16px;background:#C8C4B4"></div>
<div style="left:1100px;top:156px;width:1px;height:16px;background:#FFFFFF"></div>
<div style="left:1154px;top:156px;width:1px;height:16px;background:#C8C4B4"></div>
<div style="left:1155px;top:156px;width:1px;height:16px;background:#FFFFFF"></div>
<div class="t" style="left:1102px;top:157px;height:16px;line-height:16px;text-align:left;">CPU</div>
<div style="left:1209px;top:156px;width:1px;height:16px;background:#C8C4B4"></div>
<div style="left:1210px;top:156px;width:1px;height:16px;background:#FFFFFF"></div>
<div class="t" style="left:1157px;top:157px;height:16px;line-height:16px;text-align:left;">Load (%)</div>
<div style="left:1263px;top:156px;width:1px;height:16px;background:#C8C4B4"></div>
<div style="left:1264px;top:156px;width:1px;height:16px;background:#FFFFFF"></div>
<div class="t" style="left:1212px;top:157px;height:16px;line-height:16px;text-align:left;">IRQ (%)</div>
<div style="left:1319px;top:156px;width:1px;height:16px;background:#C8C4B4"></div>
<div style="left:1320px;top:156px;width:1px;height:16px;background:#FFFFFF"></div>
<div class="t" style="left:1266px;top:157px;height:16px;line-height:16px;text-align:left;">Disk (%)</div>
<div style="left:1073px;top:187px;width:265px;height:1px;background:#EAE8E2"></div>
<div style="left:1073px;top:202px;width:265px;height:1px;background:#EAE8E2"></div>
<div style="left:1099px;top:172px;width:1px;height:31px;background:#EAE8E2"></div>
<div style="left:1154px;top:172px;width:1px;height:31px;background:#EAE8E2"></div>
<div style="left:1209px;top:172px;width:1px;height:31px;background:#EAE8E2"></div>
<div style="left:1263px;top:172px;width:1px;height:31px;background:#EAE8E2"></div>
<div style="left:1319px;top:172px;width:1px;height:31px;background:#EAE8E2"></div>
<div class="t" style="left:1099px;top:173px;height:14px;line-height:14px;width:53px;text-align:right;">1</div>
<div class="t" style="left:1154px;top:173px;height:14px;line-height:14px;width:53px;text-align:right;">100</div>
<div class="t" style="left:1209px;top:173px;height:14px;line-height:14px;width:52px;text-align:right;">26</div>
<div class="t" style="left:1263px;top:173px;height:14px;line-height:14px;width:54px;text-align:right;">0</div>
<div class="t" style="left:1099px;top:188px;height:14px;line-height:14px;width:53px;text-align:right;">2</div>
<div class="t" style="left:1154px;top:188px;height:14px;line-height:14px;width:53px;text-align:right;">1</div>
<div class="t" style="left:1209px;top:188px;height:14px;line-height:14px;width:52px;text-align:right;">0</div>
<div class="t" style="left:1263px;top:188px;height:14px;line-height:14px;width:54px;text-align:right;">0</div>
<svg style="position:absolute;left:1140px;top:160px" width="8" height="8"><path d="M1 7 L4 1 L7 7" fill="none" stroke="#D0CCC0" stroke-width="1"/></svg>
<svg style="position:absolute;left:1324px;top:159px" width="12" height="8"><path d="M0.5 1 H10.5 L5.5 6.5Z" fill="#000"/></svg>
<div class="t" style="left:1073px;top:417px;height:20px;line-height:20px;text-align:left;">2 items</div>
<div style="left:126px;top:400px;width:843px;height:457px;background:#EEE9D9;border:1px solid #000"></div>
<div style="left:127px;top:401px;width:841px;height:455px;border-top:1px solid #F4F0E6;border-left:1px solid #F4F0E6;border-right:1px solid #FFFDF6;border-bottom:1px solid #FFFDF6"></div>
<div style="left:128px;top:402px;width:839px;height:21px;background:#4A4AD4"></div>
<div class="t" style="left:132px;top:404px;height:20px;line-height:20px;text-align:left;color:#FFFFFF">Bandwidth Test</div>
<div style="left:932px;top:405px;width:15px;height:15px;background:#FBFAF6;border:1px solid #222"></div>
<div style="left:949px;top:405px;width:15px;height:15px;background:#FBFAF6;border:1px solid #222"></div>
<div style="left:935px;top:408px;width:9px;height:9px;border:1px solid #222;border-top-width:2px"></div>
<svg style="position:absolute;left:952px;top:408px" width="9" height="9"><path d="M1 1 L8 8 M8 1 L1 8" stroke="#222" stroke-width="2"/></svg>
<div class="t" style="left:130px;top:431px;height:18px;line-height:18px;width:117px;text-align:right;">Test To:</div>
<div style="left:253px;top:430px;width:631px;height:18px;background:#FFFFFF;border:1px solid #A8A494;box-shadow:1px 1px 0 #F8F6F0;"></div>
<div class="t" style="left:256px;top:431px;height:18px;line-height:18px;text-align:left;">10.10.10.1</div>
<div class="t" style="left:130px;top:453px;height:19px;line-height:19px;width:117px;text-align:right;">Protocol:</div>
<svg style="position:absolute;left:253px;top:455px" width="12" height="12"><circle cx="6" cy="6" r="5" fill="#FFFFFF" stroke="#C8C4B8" stroke-width="1"/><path d="M2.2 8.8 A5 5 0 0 1 8.8 2.2" fill="none" stroke="#404040" stroke-width="1.2"/></svg>
<div class="t" style="left:271px;top:454px;height:17px;line-height:17px;text-align:left;">udp</div>
<svg style="position:absolute;left:848px;top:455px" width="12" height="12"><circle cx="6" cy="6" r="5" fill="#FFFFFF" stroke="#C8C4B8" stroke-width="1"/><path d="M2.2 8.8 A5 5 0 0 1 8.8 2.2" fill="none" stroke="#404040" stroke-width="1.2"/><circle cx="6" cy="6" r="2" fill="#000"/></svg>
<div class="t" style="left:867px;top:454px;height:17px;line-height:17px;text-align:left;">tcp</div>
<div class="t" style="left:130px;top:475px;height:19px;line-height:19px;width:117px;text-align:right;color:#ACA899">Local UDP Tx Size:</div>
<div style="left:253px;top:474px;width:631px;height:19px;background:#EEE9D9;border:1px solid #A8A494;box-shadow:1px 1px 0 #F8F6F0;"></div>
<div class="t" style="left:256px;top:475px;height:19px;line-height:19px;text-align:left;">1500</div>
<div class="t" style="left:130px;top:500px;height:18px;line-height:18px;width:117px;text-align:right;color:#ACA899">Remote UDP Tx Size:</div>
<div style="left:253px;top:499px;width:631px;height:18px;background:#EEE9D9;border:1px solid #A8A494;box-shadow:1px 1px 0 #F8F6F0;"></div>
<div class="t" style="left:256px;top:500px;height:18px;line-height:18px;text-align:left;">1500</div>
<div class="t" style="left:130px;top:525px;height:18px;line-height:18px;width:117px;text-align:right;">Direction:</div>
<div style="left:253px;top:524px;width:612px;height:18px;background:#FFFFFF;border:1px solid #A8A494;box-shadow:1px 1px 0 #F8F6F0;"></div>
<div class="t" style="left:256px;top:525px;height:18px;line-height:18px;text-align:left;">both</div>
<div style="left:865px;top:524px;width:18px;height:18px;background:#EEE9D9;border:1px solid #C8C4B4"></div>
<svg style="position:absolute;left:868px;top:527px" width="12" height="12"><path d="M2 2 H10" stroke="#000" stroke-width="1.5"/><path d="M1.5 5 H10.5 L6 10Z" fill="#000"/></svg>
<div style="left:135px;top:551px;width:750px;height:1px;background:#CCC8BA"></div>
<div style="left:135px;top:552px;width:750px;height:1px;background:#F6F2E8"></div>
<div class="t" style="left:130px;top:560px;height:19px;line-height:19px;width:117px;text-align:right;">TCP Connection Count:</div>
<div style="left:253px;top:559px;width:631px;height:19px;background:#FFFFFF;border:1px solid #A8A494;box-shadow:1px 1px 0 #F8F6F0;"></div>
<div class="t" style="left:256px;top:560px;height:19px;line-height:19px;text-align:left;">100</div>
<div class="t" style="left:130px;top:585px;height:18px;line-height:18px;width:117px;text-align:right;">Local Tx Speed:</div>
<div style="left:253px;top:584px;width:590px;height:18px;background:#EEE9D9;border:1px solid #A8A494;box-shadow:1px 1px 0 #F8F6F0;"></div>
<svg style="position:absolute;left:847px;top:591px" width="10" height="8"><path d="M0.5 1 H9.5 L5 6.5Z" fill="#000"/></svg>
<div class="t" style="left:864px;top:586px;height:17px;line-height:17px;text-align:left;">bps</div>
<div class="t" style="left:130px;top:611px;height:19px;line-height:19px;width:117px;text-align:right;">Remote Tx Speed:</div>
<div style="left:253px;top:610px;width:590px;height:19px;background:#EEE9D9;border:1px solid #A8A494;box-shadow:1px 1px 0 #F8F6F0;"></div>
<svg style="position:absolute;left:847px;top:617px" width="10" height="8"><path d="M0.5 1 H9.5 L5 6.5Z" fill="#000"/></svg>
<div class="t" style="left:864px;top:612px;height:17px;line-height:17px;text-align:left;">bps</div>
<div class="t" style="left:130px;top:637px;height:18px;line-height:18px;width:117px;text-align:right;">User:</div>
<div style="left:253px;top:636px;width:613px;height:18px;background:#FFFFFF;border:1px solid #A8A494;box-shadow:1px 1px 0 #F8F6F0;"></div>
<div class="t" style="left:256px;top:637px;height:18px;line-height:18px;text-align:left;">admin</div>
<svg style="position:absolute;left:870px;top:642px" width="10" height="8"><path d="M0.5 7 H9.5 L5 1.5Z" fill="#000"/></svg>
<div class="t" style="left:130px;top:663px;height:19px;line-height:19px;width:117px;text-align:right;">Password:</div>
<div style="left:253px;top:662px;width:613px;height:19px;background:#EEE9D9;border:1px solid #A8A494;box-shadow:1px 1px 0 #F8F6F0;"></div>
<svg style="position:absolute;left:870px;top:668px" width="10" height="8"><path d="M0.5 1 H9.5 L5 6.5Z" fill="#000"/></svg>
<div style="left:135px;top:691px;width:750px;height:1px;background:#CCC8BA"></div>
<div style="left:135px;top:692px;width:750px;height:1px;background:#F6F2E8"></div>
<div class="t" style="left:130px;top:700px;height:17px;line-height:17px;width:117px;text-align:right;">Tx/Rx 10s Average:</div>
<div style="left:253px;top:699px;width:631px;height:17px;background:#EEE9D9;border:1px solid #A8A494;box-shadow:1px 1px 0 #F8F6F0;"></div>
<div class="t" style="left:256px;top:700px;height:17px;line-height:17px;text-align:left;">924.1 Mbps/926.7 Mbps</div>
<div class="t" style="left:130px;top:725px;height:17px;line-height:17px;width:117px;text-align:right;">Tx/Rx Average:</div>
<div style="left:253px;top:724px;width:631px;height:17px;background:#EEE9D9;border:1px solid #A8A494;box-shadow:1px 1px 0 #F8F6F0;"></div>
<div class="t" style="left:256px;top:725px;height:17px;line-height:17px;text-align:left;">918.4 Mbps/926.9 Mbps</div>
<div style="left:900px;top:430px;width:59px;height:23px;background:#EEE9D9;border:1px solid #A09C8C;box-shadow:inset 1px 1px 0 #F8F6EE"></div>
<div class="t" style="left:900px;top:431px;height:23px;line-height:23px;width:59px;text-align:center;">Start</div>
<div style="left:900px;top:456px;width:59px;height:23px;background:#EEE9D9;border:1px solid #000;box-shadow:inset 1px 1px 0 #F8F6EE"></div>
<div class="t" style="left:900px;top:457px;height:23px;line-height:23px;width:59px;text-align:center;">Stop</div>
<div style="left:900px;top:482px;width:59px;height:23px;background:#EEE9D9;border:1px solid #A09C8C;box-shadow:inset 1px 1px 0 #F8F6EE"></div>
<div class="t" style="left:900px;top:483px;height:23px;line-height:23px;width:59px;text-align:center;">Close</div>
<div style="left:135px;top:749px;width:749px;height:77px;background:#FFFFFF;border-top:2px solid #6A665A;border-left:1px solid #8A8678"></div>
<div style="left:135px;top:826px;width:749px;height:6px;background:#F6F2EC"></div>
<div style="left:136px;top:751px;width:747px;height:13px"><div style="left:14px;top:0;width:1px;height:11px;background:#D8E0E8"></div><div style="left:29px;top:0;width:1px;height:11px;background:#D8E0E8"></div><div style="left:44px;top:0;width:1px;height:11px;background:#D8E0E8"></div><div style="left:59px;top:0;width:1px;height:11px;background:#D8E0E8"></div><div style="left:74px;top:0;width:1px;height:11px;background:#D8E0E8"></div><div style="left:89px;top:0;width:1px;height:11px;background:#D8E0E8"></div><div style="left:104px;top:0;width:1px;height:11px;background:#D8E0E8"></div><div style="left:119px;top:0;width:1px;height:11px;background:#D8E0E8"></div><div style="left:134px;top:0;width:1px;height:11px;background:#D8E0E8"></div><div style="left:149px;top:0;width:1px;height:11px;background:#D8E0E8"></div><div style="left:164px;top:0;width:1px;height:11px;background:#D8E0E8"></div><div style="left:179px;top:0;width:1px;height:11px;background:#D8E0E8"></div><div style="left:194px;top:0;width:1px;height:11px;background:#D8E0E8"></div><div style="left:209px;top:0;width:1px;height:11px;background:#D8E0E8"></div><div style="left:224px;top:0;width:1px;height:11px;background:#D8E0E8"></div><div style="left:239px;top:0;width:1px;height:11px;background:#D8E0E8"></div><div style="left:254px;top:0;width:1px;height:11px;background:#D8E0E8"></div><div style="left:269px;top:0;width:1px;height:11px;background:#D8E0E8"></div><div style="left:284px;top:0;width:1px;height:11px;background:#D8E0E8"></div><div style="left:299px;top:0;width:1px;height:11px;background:#D8E0E8"></div><div style="left:314px;top:0;width:1px;height:11px;background:#D8E0E8"></div><div style="left:329px;top:0;width:1px;height:11px;background:#D8E0E8"></div><div style="left:344px;top:0;width:1px;height:11px;background:#D8E0E8"></div><div style="left:359px;top:0;width:1px;height:11px;background:#D8E0E8"></div><div style="left:374px;top:0;width:1px;height:11px;background:#D8E0E8"></div><div style="left:389px;top:0;width:1px;height:11px;background:#D8E0E8"></div><div style="left:404px;top:0;width:1px;height:11px;background:#D8E0E8"></div><div style="left:419px;top:0;width:1px;height:11px;background:#D8E0E8"></div><div style="left:434px;top:0;width:1px;height:11px;background:#D8E0E8"></div><div style="left:449px;top:0;width:1px;height:11px;background:#D8E0E8"></div><div style="left:464px;top:0;width:1px;height:11px;background:#D8E0E8"></div><div style="left:479px;top:0;width:1px;height:11px;background:#D8E0E8"></div><div style="left:494px;top:0;width:1px;height:11px;background:#D8E0E8"></div><div style="left:509px;top:0;width:1px;height:11px;background:#D8E0E8"></div><div style="left:524px;top:0;width:1px;height:11px;background:#D8E0E8"></div><div style="left:539px;top:0;width:1px;height:11px;background:#D8E0E8"></div><div style="left:554px;top:0;width:1px;height:11px;background:#D8E0E8"></div><div style="left:569px;top:0;width:1px;height:11px;background:#D8E0E8"></div><div style="left:584px;top:0;width:1px;height:11px;background:#D8E0E8"></div><div style="left:599px;top:0;width:1px;height:11px;background:#D8E0E8"></div><div style="left:614px;top:0;width:1px;height:11px;background:#D8E0E8"></div><div style="left:629px;top:0;width:1px;height:11px;background:#D8E0E8"></div><div style="left:644px;top:0;width:1px;height:11px;background:#D8E0E8"></div><div style="left:659px;top:0;width:1px;height:11px;background:#D8E0E8"></div><div style="left:674px;top:0;width:1px;height:11px;background:#D8E0E8"></div><div style="left:689px;top:0;width:1px;height:11px;background:#D8E0E8"></div><div style="left:704px;top:0;width:1px;height:11px;background:#D8E0E8"></div><div style="left:719px;top:0;width:1px;height:11px;background:#D8E0E8"></div><div style="left:734px;top:0;width:1px;height:11px;background:#D8E0E8"></div></div>
<div style="left:136px;top:762px;width:747px;height:64px;background:repeating-linear-gradient(90deg,#7A0050 0px,#7A0050 2px,#FFE8F6 2px,#FFE8F6 3px,#6E00A0 3px,#6E00A0 5px,#FFB8D0 5px,#FFB8D0 6px,#2A0068 6px,#2A0068 8px,#F0E0FF 8px,#F0E0FF 9px)"></div>
<div style="left:136px;top:762px;width:2px;height:64px;background:#C02020"></div>
<div style="left:139px;top:785px;width:104px;height:38px;background:#FFFFFF;border:1px solid #303030"></div>
<div style="left:142px;top:789px;width:15px;height:13px;background:#0010F0;border:1px solid #000030"></div>
<div style="left:142px;top:805px;width:15px;height:13px;background:#F01010;border:1px solid #300000"></div>
<div class="t" style="left:159px;top:789px;height:15px;line-height:15px;text-align:left;">Tx:</div>
<div class="t" style="left:180px;top:789px;height:15px;line-height:15px;text-align:left;">926.2 Mbps</div>
<div class="t" style="left:159px;top:805px;height:15px;line-height:15px;text-align:left;">Rx:</div>
<div class="t" style="left:180px;top:805px;height:15px;line-height:15px;text-align:left;">924.0 Mbps</div>
<div style="left:128px;top:834px;width:838px;height:21px;background:#EEE9D9;border-top:1px solid #C8C4B4;border-left:1px solid #C8C4B4"></div>
<div class="t" style="left:131px;top:835px;height:19px;line-height:19px;text-align:left;">running...</div>
<div style="left:1005px;top:485px;width:359px;height:371px;background:#EEE9D9;border:1px solid #000"></div>
<div style="left:1006px;top:486px;width:357px;height:369px;border-top:1px solid #F4F0E6;border-left:1px solid #F4F0E6;border-right:1px solid #FFFDF6;border-bottom:1px solid #FFFDF6"></div>
<div style="left:1007px;top:487px;width:355px;height:21px;background:#C0BAB0"></div>
<div class="t" style="left:1011px;top:489px;height:20px;line-height:20px;text-align:left;color:#F6F4EE">Resources</div>
<div style="left:1327px;top:490px;width:15px;height:15px;background:#FBFAF6;border:1px solid #222"></div>
<div style="left:1344px;top:490px;width:15px;height:15px;background:#FBFAF6;border:1px solid #222"></div>
<div style="left:1330px;top:493px;width:9px;height:9px;border:1px solid #222;border-top-width:2px"></div>
<svg style="position:absolute;left:1347px;top:493px" width="9" height="9"><path d="M1 1 L8 8 M8 1 L1 8" stroke="#222" stroke-width="2"/></svg>
<div class="t" style="left:1010px;top:516px;height:18px;line-height:18px;width:139px;text-align:right;">Uptime:</div>
<div style="left:1155px;top:515px;width:125px;height:18px;background:#EEE9D9;border:1px solid #A8A494;box-shadow:1px 1px 0 #F8F6F0;"></div>
<div class="t" style="left:1158px;top:516px;height:18px;line-height:18px;text-align:left;">00:23:34</div>
<div class="t" style="left:1010px;top:541px;height:18px;line-height:18px;width:139px;text-align:right;">Free Memory:</div>
<div style="left:1155px;top:540px;width:125px;height:18px;background:#EEE9D9;border:1px solid #A8A494;box-shadow:1px 1px 0 #F8F6F0;"></div>
<div class="t" style="left:1158px;top:541px;height:18px;line-height:18px;text-align:left;">973.8 MiB</div>
<div class="t" style="left:1010px;top:566px;height:18px;line-height:18px;width:139px;text-align:right;">Total Memory:</div>
<div style="left:1155px;top:565px;width:125px;height:18px;background:#EEE9D9;border:1px solid #A8A494;box-shadow:1px 1px 0 #F8F6F0;"></div>
<div class="t" style="left:1158px;top:566px;height:18px;line-height:18px;text-align:left;">1000.7 MiB</div>
<div class="t" style="left:1010px;top:591px;height:18px;line-height:18px;width:139px;text-align:right;">CPU:</div>
<div style="left:1155px;top:590px;width:125px;height:18px;background:#EEE9D9;border:1px solid #A8A494;box-shadow:1px 1px 0 #F8F6F0;"></div>
<div class="t" style="left:1158px;top:591px;height:18px;line-height:18px;text-align:left;">Intel(R)</div>
<div class="t" style="left:1010px;top:616px;height:18px;line-height:18px;width:139px;text-align:right;">CPU Count:</div>
<div style="left:1155px;top:615px;width:125px;height:18px;background:#EEE9D9;border:1px solid #A8A494;box-shadow:1px 1px 0 #F8F6F0;"></div>
<div class="t" style="left:1158px;top:616px;height:18px;line-height:18px;text-align:left;">2</div>
<div class="t" style="left:1010px;top:641px;height:18px;line-height:18px;width:139px;text-align:right;">CPU Frequency:</div>
<div style="left:1155px;top:640px;width:125px;height:18px;background:#EEE9D9;border:1px solid #A8A494;box-shadow:1px 1px 0 #F8F6F0;"></div>
<div class="t" style="left:1158px;top:641px;height:18px;line-height:18px;text-align:left;">3000 MHz</div>
<div class="t" style="left:1010px;top:666px;height:18px;line-height:18px;width:139px;text-align:right;">CPU Load:</div>
<div style="left:1155px;top:665px;width:125px;height:18px;background:#EEE9D9;border:1px solid #A8A494;box-shadow:1px 1px 0 #F8F6F0;"></div>
<div class="t" style="left:1158px;top:666px;height:18px;line-height:18px;text-align:left;">51 %</div>
<div class="t" style="left:1010px;top:691px;height:18px;line-height:18px;width:139px;text-align:right;">Free HDD Space:</div>
<div style="left:1155px;top:690px;width:125px;height:18px;background:#EEE9D9;border:1px solid #A8A494;box-shadow:1px 1px 0 #F8F6F0;"></div>
<div class="t" style="left:1158px;top:691px;height:18px;line-height:18px;text-align:left;">924.7 MB</div>
<div class="t" style="left:1010px;top:716px;height:18px;line-height:18px;width:139px;text-align:right;">Total HDD Size:</div>
<div style="left:1155px;top:715px;width:125px;height:18px;background:#EEE9D9;border:1px solid #A8A494;box-shadow:1px 1px 0 #F8F6F0;"></div>
<div class="t" style="left:1158px;top:716px;height:18px;line-height:18px;text-align:left;">970.8 MB</div>
<div style="left:1016px;top:742px;width:264px;height:1px;background:#D0CCC0"></div>
<div style="left:1016px;top:743px;width:264px;height:1px;background:#F6F2E8"></div>
<div class="t" style="left:1008px;top:751px;height:18px;line-height:18px;width:141px;text-align:right;">Sector Writes Since Reboot:</div>
<div style="left:1155px;top:750px;width:125px;height:18px;background:#EEE9D9;border:1px solid #A8A494;box-shadow:1px 1px 0 #F8F6F0;"></div>
<div class="t" style="left:1158px;top:751px;height:18px;line-height:18px;text-align:left;">1 757</div>
<div class="t" style="left:1008px;top:776px;height:18px;line-height:18px;width:141px;text-align:right;">Total Sector Writes:</div>
<div style="left:1155px;top:775px;width:125px;height:18px;background:#EEE9D9;border:1px solid #A8A494;box-shadow:1px 1px 0 #F8F6F0;"></div>
<div class="t" style="left:1158px;top:776px;height:18px;line-height:18px;text-align:left;">1 757</div>
<div class="t" style="left:1008px;top:801px;height:18px;line-height:18px;width:141px;text-align:right;">Architecture Name:</div>
<div style="left:1155px;top:800px;width:125px;height:18px;background:#EEE9D9;border:1px solid #A8A494;box-shadow:1px 1px 0 #F8F6F0;"></div>
<div class="t" style="left:1158px;top:801px;height:18px;line-height:18px;text-align:left;">x86</div>
<div class="t" style="left:1008px;top:826px;height:18px;line-height:18px;width:141px;text-align:right;">Board Name:</div>
<div style="left:1155px;top:825px;width:125px;height:18px;background:#EEE9D9;border:1px solid #A8A494;box-shadow:1px 1px 0 #F8F6F0;"></div>
<div class="t" style="left:1158px;top:826px;height:18px;line-height:18px;text-align:left;">x86</div>
<div style="left:1295px;top:514px;width:59px;height:24px;background:#EEE9D9;border:1px solid #000;box-shadow:inset 1px 1px 0 #F8F6EE"></div>
<div class="t" style="left:1295px;top:515px;height:24px;line-height:24px;width:59px;text-align:center;">OK</div>
<div style="left:1295px;top:546px;width:59px;height:23px;background:#EEE9D9;border:1px solid #A09C8C;box-shadow:inset 1px 1px 0 #F8F6EE"></div>
<div class="t" style="left:1295px;top:547px;height:23px;line-height:23px;width:59px;text-align:center;">PCI</div>
<div style="left:1295px;top:572px;width:59px;height:23px;background:#EEE9D9;border:1px solid #A09C8C;box-shadow:inset 1px 1px 0 #F8F6EE"></div>
<div class="t" style="left:1295px;top:573px;height:23px;line-height:23px;width:59px;text-align:center;">USB</div>
<div style="left:1295px;top:598px;width:59px;height:23px;background:#EEE9D9;border:1px solid #A09C8C;box-shadow:inset 1px 1px 0 #F8F6EE"></div>
<div class="t" style="left:1295px;top:599px;height:23px;line-height:23px;width:59px;text-align:center;">CPU</div>
<div style="left:1295px;top:624px;width:59px;height:23px;background:#EEE9D9;border:1px solid #A09C8C;box-shadow:inset 1px 1px 0 #F8F6EE"></div>
<div class="t" style="left:1295px;top:625px;height:23px;line-height:23px;width:59px;text-align:center;">IRQ</div>
<div style="left:1295px;top:650px;width:59px;height:23px;background:#EEE9D9;border:1px solid #A09C8C;box-shadow:inset 1px 1px 0 #F8F6EE"></div>
<div class="t" style="left:1295px;top:651px;height:23px;line-height:23px;width:59px;text-align:center;">RPS</div>
</body></html>
